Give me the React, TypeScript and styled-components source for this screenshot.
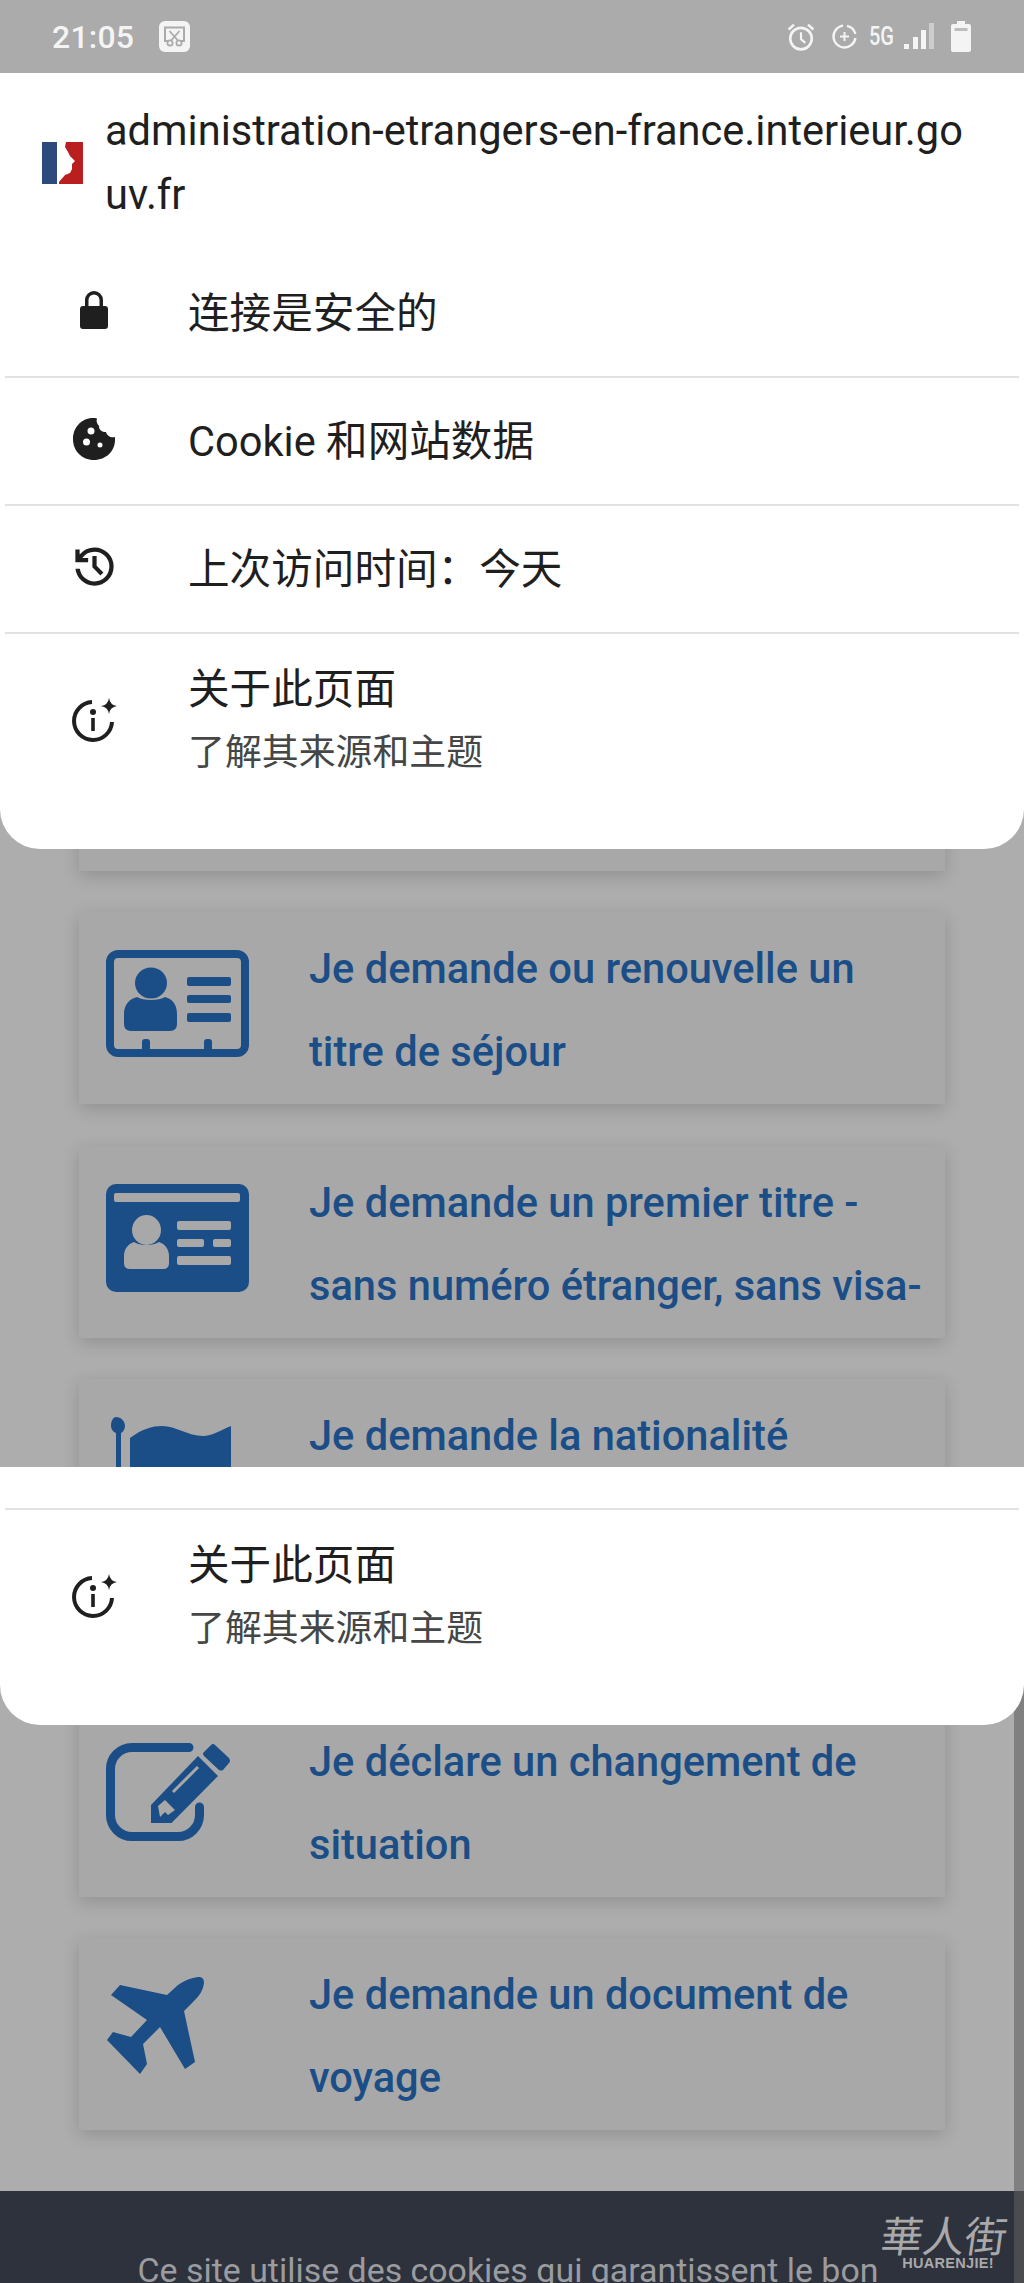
import React from 'react'
import styled, { createGlobalStyle } from 'styled-components'

const GlobalStyle = createGlobalStyle`
  html, body { margin: 0; padding: 0; background: #adadad; }
  body { font-family: Roboto, "Noto Sans CJK SC", sans-serif; }
`

const Screen = styled.div`
  position: relative;
  width: 1024px;
  height: 2283px;
  overflow: hidden;
  background: #adadad;
`

const StatusBar = styled.div`
  height: 73px;
  box-sizing: border-box;
  padding: 0 53px 0 52px;
  display: flex;
  align-items: center;
  justify-content: space-between;
  background: #ababab;
  color: #f4f4f4;
`

const StatusLeft = styled.div`
  display: flex;
  align-items: center;
  gap: 25px;
`

const StatusRight = styled.div`
  display: flex;
  align-items: center;
`

const Time = styled.span`
  font-size: 32px;
  font-weight: 500;
  letter-spacing: 0.2px;
`

const FiveG = styled.span`
  display: inline-block;
  width: 26px;
  margin: 0 9px 0 12px;
  font-size: 25px;
  font-weight: 500;
  transform: scaleX(0.8);
  transform-origin: left center;
  white-space: nowrap;
`

const StatusIcon = styled.svg<{ $gap?: number }>`
  display: block;
  flex: none;
  margin-right: ${p => p.$gap ?? 0}px;
`

const CardList = styled.main`
  display: flex;
  flex-direction: column;
  gap: 41.5px;
  padding-top: 605.5px;
  padding-bottom: 61px;
`

const Card = styled.section<{ $height?: number }>`
  box-sizing: border-box;
  width: 866px;
  height: ${p => p.$height ?? 192}px;
  margin-left: 79px;
  padding: 15px 0 11px 27px;
  display: flex;
  align-items: flex-start;
  background: #a8a8a8;
  box-shadow: 0 5px 16px rgba(0, 0, 0, 0.16);
`

const CardIcon = styled.svg`
  display: block;
  flex: none;
  width: 143px;
  margin-top: 23px;
  color: #1b4e87;
`

const CardTitle = styled.h2`
  margin: 0 0 0 60px;
  font-size: 41.6px;
  line-height: 83px;
  font-weight: 500;
  color: #1b4e87;
  white-space: nowrap;
`

const CookieBar = styled.footer`
  height: 92px;
  padding: 58px 8px 0 0;
  background: #2e323c;
  color: #9b9ca0;
  font-size: 33.9px;
  line-height: 44px;
  text-align: center;
`

const ScrollTrack = styled.div`
  position: absolute;
  top: 1500px;
  right: 0;
  bottom: 0;
  width: 10px;
  background: rgba(95, 95, 95, 0.575);
`

const Watermark = styled.div`
  position: absolute;
  top: 2213px;
  left: 875px;
  width: 139px;
  color: #a9a9a9;
  text-align: center;
`

const WatermarkHan = styled.div`
  font-family: "Noto Sans CJK SC", sans-serif;
  font-size: 42px;
  line-height: 42px;
  font-weight: 400;
  white-space: nowrap;
  transform: skewX(-8deg);
`

const WatermarkLatin = styled.div`
  margin: 1px 0 0 7px;
  font-family: "Liberation Sans", sans-serif;
  font-size: 14.5px;
  line-height: 14px;
  font-weight: 700;
  letter-spacing: 0.3px;
`

const Sheet = styled.div<{ $top: number; $height: number }>`
  position: absolute;
  top: ${p => p.$top}px;
  left: 0;
  right: 0;
  height: ${p => p.$height}px;
  background: #fff;
  border-radius: 0 0 40px 40px;
  color: #1f1f1f;
`

const SheetHeader = styled.div`
  display: flex;
  align-items: center;
  height: 177px;
  box-sizing: border-box;
  padding: 3px 0 0 42px;
`

const SiteName = styled.div`
  width: 870px;
  margin-left: 22px;
  font-size: 41.6px;
  line-height: 64px;
  word-break: break-all;
`

const Row = styled.div`
  display: flex;
  align-items: center;
  box-sizing: border-box;
  height: 126px;
  padding-bottom: 6px;
  font-size: 41.6px;
`

const RowIconSlot = styled.div`
  flex: none;
  width: 188px;
  display: flex;
  justify-content: center;
`

const RowIcon = styled.svg`
  display: block;
  color: #1f1f1f;
`

const AboutIcon = styled(RowIcon)`
  margin-left: 2px;
`

const Divider = styled.div`
  height: 2px;
  margin: 0 5px;
  background: #e1e1e1;
`

const LowerGap = styled.div`
  height: 41px;
`

const AboutRow = styled.div`
  display: flex;
  align-items: center;
  padding-top: 24px;
`

const AboutTitle = styled.div`
  font-size: 41.6px;
  line-height: 64px;
`

const AboutSub = styled.div`
  font-size: 36.9px;
  line-height: 62px;
  color: #444746;
`

const AboutInfo = () => (
  <AboutRow>
    <RowIconSlot>
      <AboutIcon width="46" height="46" viewBox="0 0 46 46" fill="none">
        <path d="M20 4A19 19 0 1 0 40 24" stroke="currentColor" strokeWidth="4" />
        <path d="M37 0Q38 7 45 8Q38 9 37 16Q36 9 29 8Q36 7 37 0Z" fill="currentColor" />
        <circle cx="21" cy="14" r="3" fill="currentColor" />
        <rect x="19.2" y="20" width="3.6" height="13" fill="currentColor" />
      </AboutIcon>
    </RowIconSlot>
    <div>
      <AboutTitle>关于此页面</AboutTitle>
      <AboutSub>了解其来源和主题</AboutSub>
    </div>
  </AboutRow>
)

export default function App() {
  return (
    <Screen>
      <GlobalStyle />
      <StatusBar>
        <StatusLeft>
          <Time>21:05</Time>
          <StatusIcon width="31" height="31" viewBox="0 0 31 31">
            <rect width="31" height="31" rx="6" fill="#f4f4f4" />
            <path d="M6 14V6.5h19V14M6 14v6h4M25 14v6h-4" fill="none" stroke="#ababab" strokeWidth="2" />
            <path d="M10.5 10l8 9M20.5 10l-8 9" stroke="#ababab" strokeWidth="1.8" />
            <circle cx="11" cy="22" r="2.6" fill="none" stroke="#ababab" strokeWidth="1.8" />
            <circle cx="20" cy="22" r="2.6" fill="none" stroke="#ababab" strokeWidth="1.8" />
          </StatusIcon>
        </StatusLeft>
        <StatusRight>
          <StatusIcon $gap={17} width="28" height="28" viewBox="0 0 26 26" fill="none" stroke="#f4f4f4">
            <circle cx="13" cy="14.5" r="10" strokeWidth="2.4" />
            <path d="M13 8.5v6.5l4 3.5" strokeWidth="2" />
            <path d="M1.5 6L6.5 1.5M24.5 6L19.5 1.5" strokeWidth="2.4" />
          </StatusIcon>
          <StatusIcon width="25" height="25" viewBox="0 0 25 25" fill="none" stroke="#f4f4f4">
            <path d="M11 1.6A11 11 0 1 0 23.4 14" strokeWidth="2.4" />
            <path d="M15 1.8A11 11 0 0 1 23.4 10" strokeWidth="2.4" />
            <path d="M12.5 8v9M8 12.5h9" strokeWidth="2" />
          </StatusIcon>
          <FiveG>5G</FiveG>
          <StatusIcon $gap={17} width="30" height="27" viewBox="0 0 30 27">
            <rect x="0" y="21" width="5" height="5" fill="#f4f4f4" />
            <rect x="9" y="14" width="5" height="12" fill="#f4f4f4" />
            <rect x="17" y="7" width="5" height="19" fill="#f4f4f4" />
            <rect x="25" y="0" width="5" height="26" fill="#cdcdcd" />
          </StatusIcon>
          <StatusIcon width="20" height="31" viewBox="0 0 20 31">
            <path d="M6 0h8v3h4a2 2 0 0 1 2 2v24a2 2 0 0 1-2 2H2a2 2 0 0 1-2-2V5a2 2 0 0 1 2-2h4Z" fill="#f4f4f4" />
            <rect x="3.5" y="7" width="13" height="3" fill="#bdbdbd" />
          </StatusIcon>
        </StatusRight>
      </StatusBar>

      <CardList>
        <Card />
        <Card>
          <CardIcon height="107" viewBox="0 0 143 107">
            <rect x="4" y="4" width="135" height="99" rx="8" fill="none" stroke="currentColor" strokeWidth="8" />
            <ellipse cx="45" cy="33" rx="16" ry="15.5" fill="currentColor" />
            <path d="M18 64C18 54 24 49 31 47C37 51 53 51 59 47C66 49 71 54 71 64V74Q71 81 64 81H25Q18 81 18 74Z" fill="currentColor" />
            <rect x="81" y="27" width="44" height="9" rx="2" fill="currentColor" />
            <rect x="81" y="45" width="44" height="8" rx="2" fill="currentColor" />
            <rect x="81" y="63" width="44" height="9" rx="2" fill="currentColor" />
            <rect x="36" y="89" width="8" height="12" rx="3" fill="currentColor" />
            <rect x="98" y="89" width="8" height="12" rx="3" fill="currentColor" />
          </CardIcon>
          <CardTitle>
            Je demande ou renouvelle un
            <br />
            titre de séjour
          </CardTitle>
        </Card>
        <Card>
          <CardIcon height="108" viewBox="0 0 143 108">
            <rect width="143" height="108" rx="10" fill="currentColor" />
            <rect x="8" y="9" width="126" height="9" rx="2" fill="#a8a8a8" />
            <ellipse cx="40.5" cy="46" rx="14.5" ry="15" fill="#a8a8a8" />
            <path d="M18 72C18 65 22 60 28 58C33 62 48 62 53 58C59 60 63 65 63 72V79Q63 85 57 85H24Q18 85 18 79Z" fill="#a8a8a8" />
            <rect x="71" y="37" width="54" height="9" rx="2" fill="#a8a8a8" />
            <rect x="71" y="55" width="27" height="8" rx="2" fill="#a8a8a8" />
            <rect x="107" y="55" width="18" height="8" rx="2" fill="#a8a8a8" />
            <rect x="71" y="72" width="54" height="9" rx="2" fill="#a8a8a8" />
          </CardIcon>
          <CardTitle>
            Je demande un premier titre -
            <br />
            sans numéro étranger, sans visa-
          </CardTitle>
        </Card>
        <Card $height={284}>
          <CardIcon height="107" viewBox="0 0 143 107">
            <path d="M9 0C14 0 18 4 18 9C18 12 16 15 14 16V107H9V16C6 15 4 12 4 9C4 4 6 0 9 0Z" fill="currentColor" transform="translate(1 0)" />
            <path d="M24 21C36 12 46 9 56 9C70 9 82 19 97 19C106 19 115 13 125 9V107H24Z" fill="currentColor" />
          </CardIcon>
          <CardTitle>Je demande la nationalité</CardTitle>
        </Card>
        <Card>
          <CardIcon height="98" viewBox="0 0 143 98">
            <path d="M83 4.5H26A21.5 21.5 0 0 0 4.5 26V72A21.5 21.5 0 0 0 26 93.5H72A21.5 21.5 0 0 0 93.5 72V64" fill="none" stroke="currentColor" strokeWidth="9" strokeLinecap="round" />
            <path d="M105 2Q107 0 109 2L123 15Q125 18 123 20L117 27Q115 28 113 27L98 13Q96 10 98 9Z" fill="currentColor" />
            <path d="M92 13L112 33L65.5 80H45V62Z" fill="currentColor" />
            <path d="M67 49L92 24" stroke="#a8a8a8" strokeWidth="3" />
            <path d="M52 63L59 57L69 67L62 72L59 69L54 74Z" fill="#a8a8a8" />
          </CardIcon>
          <CardTitle>
            Je déclare un changement de
            <br />
            situation
          </CardTitle>
        </Card>
        <Card>
          <CardIcon height="98" viewBox="0 0 143 98">
            <path
              d="M92 1Q98 0 98 7Q97 17 87 26L78 35L89 86L79 93L54 51L37 68L41 88L34 98L1 64L7 56L25 61L41 44L5 19L14 9L61 19L72 9Q82 2 92 1Z"
              fill="currentColor"
            />
          </CardIcon>
          <CardTitle>
            Je demande un document de
            <br />
            voyage
          </CardTitle>
        </Card>
      </CardList>

      <CookieBar>Ce site utilise des cookies qui garantissent le bon</CookieBar>

      <ScrollTrack />
      <Watermark>
        <WatermarkHan>華人街</WatermarkHan>
        <WatermarkLatin>HUARENJIE!</WatermarkLatin>
      </Watermark>

      <Sheet $top={73} $height={776}>
        <SheetHeader>
          <svg width="41" height="42" viewBox="0 0 41 42">
            <rect width="15" height="42" fill="#2e4a7d" />
            <rect x="15" width="26" height="42" fill="#b91f1f" />
            <path d="M15 0H24L23 5L26 10L28 14L33 19L30 22L30 27L28 31L23 33L17 40V42H15Z" fill="#fff" />
          </svg>
          <SiteName>administration-etrangers-en-france.interieur.gouv.fr</SiteName>
        </SheetHeader>
        <Row>
          <RowIconSlot>
            <RowIcon width="28" height="38" viewBox="0 0 28 38">
              <path
                d="M5 15V9a9 9 0 0 1 18 0v6h2a3 3 0 0 1 3 3v17a3 3 0 0 1-3 3H3a3 3 0 0 1-3-3V18a3 3 0 0 1 3-3ZM8.5 15h11V9a5.5 5.5 0 0 0-11 0Z"
                fill="currentColor"
                fillRule="evenodd"
              />
            </RowIcon>
          </RowIconSlot>
          连接是安全的
        </Row>
        <Divider />
        <Row>
          <RowIconSlot>
            <RowIcon width="42" height="43" viewBox="0 0 42 43">
              <path
                d="M20 1C8 1 0 11 0 22C0 34 9 43 21 43C33 43 42 34 42 23V20C38 21 34 19 33 15C29 15 26 13 26 9C24 7 23 4 24 1.5C23 1 21 1 20 1ZM18 10.5a3.5 3.5 0 1 1 0 7a3.5 3.5 0 0 1 0-7ZM13.5 21.5a3.5 3.5 0 1 1 0 7a3.5 3.5 0 0 1 0-7ZM27 25.5a2.5 2.5 0 1 1 0 5a2.5 2.5 0 0 1 0-5Z"
                fill="currentColor"
                fillRule="evenodd"
              />
            </RowIcon>
          </RowIconSlot>
          Cookie 和网站数据
        </Row>
        <Divider />
        <Row>
          <RowIconSlot>
            <RowIcon width="51" height="51" viewBox="0 0 24 24">
              <path
                d="M12 21q-3.45 0-6.013-2.288T3.05 13H5.1q.35 2.6 2.313 4.3T12 19q2.925 0 4.963-2.037T19 12q0-2.925-2.037-4.963T12 5q-1.725 0-3.225.8T6.25 8H9v2H3V4h2v2.35q1.275-1.6 3.113-2.475T12 3q3.75 0 6.375 2.625T21 12q0 3.75-2.625 6.375T12 21Zm2.8-4.8L11 12.4V7h2v4.6l3.2 3.2l-1.4 1.4Z"
                fill="currentColor"
              />
            </RowIcon>
          </RowIconSlot>
          上次访问时间：今天
        </Row>
        <Divider />
        <AboutInfo />
      </Sheet>

      <Sheet $top={1467} $height={258}>
        <LowerGap />
        <Divider />
        <AboutInfo />
      </Sheet>
    </Screen>
  )
}
